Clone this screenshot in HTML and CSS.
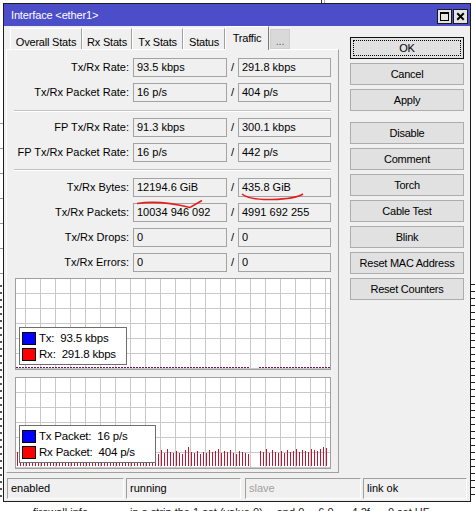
FILE: index.html
```html
<!DOCTYPE html>
<html>
<head>
<meta charset="utf-8">
<link rel="stylesheet" href="styles.css">
</head>
<body>
<div class="desk">
  <div class="window">
    <div class="titlebar">
      <span class="title">Interface &lt;ether1&gt;</span>
      <div class="tbtns">
        <span class="tbtn"><svg width="13" height="13" viewBox="0 0 13 13"><rect x="2.5" y="2.5" width="8" height="8" fill="none" stroke="#000"/><line x1="2" y1="3.5" x2="11" y2="3.5" stroke="#000"/></svg></span>
        <span class="tbtn"><svg width="14" height="13" viewBox="0 0 14 13"><path d="M3.5 3 L10.5 10 M10.5 3 L3.5 10" stroke="#000" stroke-width="2"/></svg></span>
      </div>
    </div>
    <div class="content">
      <div class="left">
        <div class="tabs">
          <div class="tab w1">Overall Stats</div>
          <div class="tab w2">Rx Stats</div>
          <div class="tab w3">Tx Stats</div>
          <div class="tab w4">Status</div>
          <div class="tab active">Traffic</div>
          <div class="tab more">...</div>
        </div>
        <div class="panel">
          <div class="row mt8"><div class="lbl">Tx/Rx Rate:</div><div class="field">93.5 kbps</div><span class="slash">/</span><div class="field f2">291.8 kbps</div></div>
          <div class="row mt6"><div class="lbl">Tx/Rx Packet Rate:</div><div class="field">16 p/s</div><span class="slash">/</span><div class="field f2">404 p/s</div></div>
          <div class="sep mt8"></div>
          <div class="row mt6"><div class="lbl">FP Tx/Rx Rate:</div><div class="field">91.3 kbps</div><span class="slash">/</span><div class="field f2">300.1 kbps</div></div>
          <div class="row mt6"><div class="lbl">FP Tx/Rx Packet Rate:</div><div class="field">16 p/s</div><span class="slash">/</span><div class="field f2">442 p/s</div></div>
          <div class="sep mt7"></div>
          <div class="row mt7"><div class="lbl">Tx/Rx Bytes:</div><div class="field">12194.6 GiB</div><span class="slash">/</span><div class="field f2">435.8 GiB</div></div>
          <div class="row mt6"><div class="lbl">Tx/Rx Packets:</div><div class="field">10034 946 092</div><span class="slash">/</span><div class="field f2">4991 692 255</div></div>
          <div class="row mt6"><div class="lbl">Tx/Rx Drops:</div><div class="field">0</div><span class="slash">/</span><div class="field f2">0</div></div>
          <div class="row mt6"><div class="lbl">Tx/Rx Errors:</div><div class="field">0</div><span class="slash">/</span><div class="field f2">0</div></div>
          <div class="graph mt6">
            <svg class="plot" width="314" height="90" viewBox="0 0 314 90">
              <path d="M0 88.5H234M243 88.5H314" stroke="#7d0f62" stroke-width="1" stroke-dasharray="2 1" fill="none"/>
            </svg>
            <div class="legend l1">
              <div class="lg-row"><span class="sw blue"></span><span class="lg-t">Tx:  93.5 kbps</span></div>
              <div class="lg-row"><span class="sw red"></span><span class="lg-t">Rx:  291.8 kbps</span></div>
            </div>
          </div>
          <div class="graph mt7">
            <svg class="plot" width="314" height="90" viewBox="0 0 314 90">
              <g stroke="#c01634" stroke-width="1" fill="none">
                <line x1="4" y1="81.5" x2="141" y2="81.5" stroke-width="13" stroke-dasharray="1 2"/>
                <path d="M1.5 88V74M142.5 88V76M145.5 88V72M148.5 88V75M151.5 88V71M154.5 88V74M157.5 88V75M160.5 88V73M163.5 88V75M166.5 88V76M169.5 88V72M172.5 88V69M175.5 88V74M178.5 88V75M181.5 88V73M184.5 88V76M187.5 88V74M190.5 88V75M193.5 88V72M196.5 88V74M199.5 88V73M202.5 88V71M205.5 88V75M208.5 88V73M211.5 88V74M214.5 88V72M217.5 88V75M220.5 88V76M223.5 88V73M226.5 88V74M229.5 88V75M232.5 88V76M244.5 88V73M247.5 88V74M250.5 88V71M253.5 88V75M256.5 88V72M259.5 88V74M262.5 88V75M265.5 88V73M268.5 88V75M271.5 88V72M274.5 88V74M277.5 88V73M280.5 88V71M283.5 88V74M286.5 88V72M289.5 88V73M292.5 88V74M295.5 88V71M298.5 88V72M301.5 88V73M304.5 88V71M307.5 88V69M310.5 88V70"/>
              </g>
            </svg>
            <div class="legend l2">
              <div class="lg-row"><span class="sw blue"></span><span class="lg-t">Tx Packet:  16 p/s</span></div>
              <div class="lg-row"><span class="sw red"></span><span class="lg-t">Rx Packet:  404 p/s</span></div>
            </div>
          </div>
        </div>
      </div>
      <div class="right">
        <div class="btn ok">OK</div>
        <div class="btn">Cancel</div>
        <div class="btn grp">Apply</div>
        <div class="btn">Disable</div>
        <div class="btn">Comment</div>
        <div class="btn">Torch</div>
        <div class="btn">Cable Test</div>
        <div class="btn">Blink</div>
        <div class="btn">Reset MAC Address</div>
        <div class="btn">Reset Counters</div>
      </div>
    </div>
    <div class="status">
      <div class="seg s1">enabled</div>
      <div class="seg s2">running</div>
      <div class="seg s3 dim">slave</div>
      <div class="seg s4">link ok</div>
    </div>
  </div>
  <div class="below"><span class="b1">firewall info</span><span class="b2">in a strip the 1 set (value 0)</span><span class="b3">and 0</span><span class="b4">6.0</span><span class="b5">4.2f</span><span class="b6">0 set HF</span></div>
  <svg class="marks" width="475" height="511" viewBox="0 0 475 511">
    <path d="M137 203.5 Q160 200 190 207.5 L202 200.5" stroke="#e41e1e" stroke-width="1.6" fill="none"/>
    <path d="M242 194 Q249 200 272 199.5 Q295 199 303 194" stroke="#e41e1e" stroke-width="1.6" fill="none"/>
  </svg>
</div>
</body>
</html>
```

FILE: styles.css
```css
* { box-sizing: border-box; }
html, body { margin: 0; padding: 0; }
body {
  width: 475px;
  height: 511px;
  overflow: hidden;
  font-family: "Liberation Sans", Arial, sans-serif;
  font-size: 11px;
  color: #000;
  background: #fff;
}
.desk {
  width: 475px;
  height: 511px;
  overflow: hidden;
  position: relative;
  padding: 3px 0 0 3px;
  background:
    linear-gradient(#333, #333) 321px 0 / 1px 3px no-repeat,
    linear-gradient(#aaa, #aaa) 324px 0 / 1px 3px no-repeat,
    repeating-linear-gradient(to bottom, #222 0 1px, transparent 1px 7px) 471px 284px / 4px 217px no-repeat,
    repeating-linear-gradient(to bottom, #999 0 1px, transparent 1px 25px) 0 123px / 3px 160px no-repeat,
    repeating-linear-gradient(to bottom, #555 0 2px, transparent 2px 7px) 0 285px / 2px 215px no-repeat,
    #fff;
}
.window {
  width: 468px;
  border: 1px solid #1e1e1e;
  background: #f0f0f0;
  padding-bottom: 2px;
}
.titlebar {
  height: 22px;
  background: #4b4ec8;
  display: flex;
  align-items: flex-start;
  justify-content: space-between;
}
.title {
  color: #fff;
  line-height: 22px;
  padding-left: 7px;
  letter-spacing: -0.15px;
}
.tbtns {
  display: flex;
  margin-top: 5px;
  margin-right: 2px;
  gap: 1px;
}
.tbtn {
  width: 15px;
  height: 15px;
  background: #e4e4e4;
  border: 1px solid #1a1a1a;
  display: flex;
  align-items: center;
  justify-content: center;
}
.tbtn svg { display: block; }
.content {
  display: flex;
}
.left {
  padding-left: 2px;
}
.tabs {
  height: 23px;
  display: flex;
  align-items: flex-end;
  padding-left: 4px;
}
.tab {
  height: 21px;
  border-top: 1px solid #fff;
  border-left: 1px solid #fff;
  border-right: 1px solid #a0a0a0;
  padding-top: 6px;
  line-height: 14px;
  text-align: center;
  background: #f0f0f0;
  letter-spacing: -0.2px;
  white-space: nowrap;
}
.w1 { width: 72px; }
.w2 { width: 50px; }
.w3 { width: 51px; }
.w4 { width: 42px; }
.tab.active {
  width: 44px;
  height: 24px;
  margin-bottom: -1px;
  padding-top: 4px;
  position: relative;
  z-index: 1;
  border-right: 1px solid #7a7a7a;
}
.tab.more {
  width: 20px;
  height: 20px;
  margin-left: 1px;
  background: #d9d9d9;
  border: 1px solid #cfcfcf;
  color: #666;
  padding-top: 4px;
}
.panel {
  width: 333px;
  height: 424px;
  border-top: 1px solid #fff;
  border-left: 1px solid #fff;
  border-right: 1px solid #a0a0a0;
  border-bottom: 1px solid #a0a0a0;
}
.mt6 { margin-top: 6px; }
.mt7 { margin-top: 7px; }
.mt8 { margin-top: 8px; }
.row {
  display: flex;
  height: 19px;
}
.lbl {
  width: 126px;
  text-align: right;
  padding-right: 4px;
  line-height: 19px;
  white-space: nowrap;
}
.field {
  width: 94px;
  height: 19px;
  border: 1px solid #a3a3a3;
  background: #f0f0f0;
  padding-left: 3px;
  line-height: 17px;
  white-space: nowrap;
}
.field.f2 { width: 93px; }
.slash {
  width: 11px;
  text-align: center;
  line-height: 19px;
}
.sep {
  height: 2px;
  margin-left: 7px;
  margin-right: 7px;
  border-top: 1px solid #c2c2c2;
  border-bottom: 1px solid #fff;
}
.graph {
  position: relative;
  margin-left: 8px;
  width: 316px;
  height: 92px;
  border: 1px solid #a0a0a0;
  background-color: #fff;
  background-image:
    linear-gradient(to right, #c9c9c9 1px, transparent 1px),
    linear-gradient(to bottom, #c9c9c9 1px, transparent 1px);
  background-size: 15px 15px;
  background-position: 9px 14px;
}
.plot { display: block; }
.legend {
  position: absolute;
  left: 3px;
  width: 108px;
  height: 38px;
  background: #fff;
  border: 1px solid #6e6e6e;
  padding: 4px 0 0 2px;
}
.legend.l1 { top: 48px; }
.legend.l2 { top: 47px; width: 137px; }
.lg-row {
  display: flex;
  align-items: flex-start;
  height: 16px;
}
.sw {
  width: 14px;
  height: 13px;
  border: 1px solid #000;
  margin-right: 3px;
}
.sw.blue { background: #0000ff; }
.sw.red { background: #ff0000; }
.lg-t {
  white-space: pre;
  line-height: 13px;
  font-size: 11.5px;
  letter-spacing: -0.2px;
}
.right {
  margin-left: 11px;
  padding-top: 11px;
  width: 114px;
}
.btn {
  position: relative;
  height: 22px;
  border: 1px solid #adadad;
  background: #e1e1e1;
  text-align: center;
  line-height: 20px;
  margin-bottom: 4px;
  letter-spacing: -0.25px;
  white-space: nowrap;
}
.btn.ok { border-color: #111; }
.btn.ok::after {
  content: "";
  position: absolute;
  top: 2px;
  left: 2px;
  right: 2px;
  bottom: 2px;
  border: 1px dotted #000;
}
.btn.grp { margin-bottom: 11px; }
.status {
  display: flex;
  margin-top: 5px;
  height: 21px;
}
.seg {
  height: 21px;
  border-top: 1px solid #a0a0a0;
  border-left: 1px solid #a0a0a0;
  border-right: 1px solid #fff;
  border-bottom: 1px solid #fff;
  padding-left: 3px;
  line-height: 19px;
  white-space: nowrap;
}
.s1 { margin-left: 3px; width: 117px; }
.s2 { margin-left: 2px; width: 115px; }
.s3 { margin-left: 4px; width: 116px; }
.s4 { margin-left: 2px; width: 104px; }
.dim { color: #a0a0a0; }
.below {
  margin-top: 3px;
  height: 14px;
  line-height: 14px;
  white-space: nowrap;
  display: flex;
  color: #222;
}
.b1 { margin-left: 30px; }
.b2 { margin-left: 42px; }
.b3 { margin-left: 14px; }
.b4 { margin-left: 14px; }
.b5 { margin-left: 18px; }
.b6 { margin-left: 18px; }
.marks {
  position: absolute;
  left: 0;
  top: 0;
  pointer-events: none;
}
```
